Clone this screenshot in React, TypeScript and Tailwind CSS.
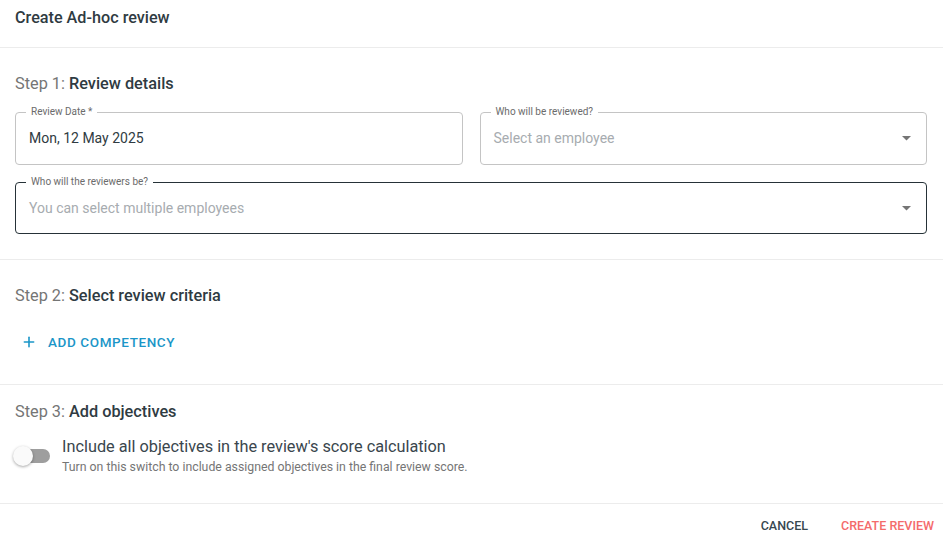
import { Plus } from 'lucide-react'

const font = { fontFamily: 'Roboto, "Liberation Sans", sans-serif' }

function Caret() {
    return (
        <svg width="9" height="5" viewBox="0 0 9 5" className="shrink-0">
            <path d="M0 0 L9 0 L4.5 4.5 Z" fill="#757575" />
        </svg>
    )
}

function OutlinedField({
    label,
    value,
    placeholder,
    select,
    focused,
    height,
}: {
    label: string
    value?: string
    placeholder?: string
    select?: boolean
    focused?: boolean
    height: string
}) {
    return (
        <div
            className={`relative flex items-center rounded-[4px] border pl-[13px] pr-[15px] ${height} ${
                focused ? 'border-[#263238]' : 'border-[#c4c4c4]'
            }`}
        >
            <span className="absolute -top-[7px] left-[10px] bg-white px-[5px] text-[10px] leading-[12px] text-[#6b6b6b]">
                {label}
            </span>
            <span className={`flex-1 text-[14px] ${value ? 'text-[#2f3b42]' : 'text-[#a7acb0]'}`}>
                {value || placeholder}
            </span>
            {select && <Caret />}
        </div>
    )
}

function StepHeading({ step, title }: { step: number; title: string }) {
    return (
        <h2 className="text-[16.3px] leading-[20px] text-[#757575]">
            Step {step}: <span className="font-medium text-[#2f3b42]">{title}</span>
        </h2>
    )
}

export default function App() {
    return (
        <div className="w-[943px] h-[541px] bg-white overflow-hidden" style={font}>
            {/* Header */}
            <div className="h-[48px] border-b border-[#ececec] pl-[15px] pt-[9px]">
                <h1 className="text-[16.2px] leading-[18px] font-medium text-[#2f3b42]">Create Ad-hoc review</h1>
            </div>

            {/* Step 1 */}
            <div className="border-b border-[#ececec] pl-[15px] pr-[16px] pt-[26px] pb-[25px]">
                <StepHeading step={1} title="Review details" />
                <div className="mt-[18px] grid grid-cols-2 gap-[17px]">
                    <OutlinedField label="Review Date *" value="Mon, 12 May 2025" height="h-[53px]" />
                    <OutlinedField
                        label="Who will be reviewed?"
                        placeholder="Select an employee"
                        select
                        height="h-[53px]"
                    />
                </div>
                <div className="mt-[17px]">
                    <OutlinedField
                        label="Who will the reviewers be?"
                        placeholder="You can select multiple employees"
                        select
                        focused
                        height="h-[52px]"
                    />
                </div>
            </div>

            {/* Step 2 */}
            <div className="border-b border-[#ececec] pl-[15px] pt-[26px] pb-[24px]">
                <StepHeading step={2} title="Select review criteria" />
                <button className="mt-[18px] flex h-[36px] items-center gap-[11px] pl-[6px] pr-2 text-[13.5px] font-medium tracking-[0.6px] text-[#1b96c8]">
                    <Plus size={16} strokeWidth={2.4} />
                    ADD COMPETENCY
                </button>
            </div>

            {/* Step 3 */}
            <div className="border-b border-[#ececec] pl-[15px] pt-[17px] pb-[28px]">
                <StepHeading step={3} title="Add objectives" />
                <div className="mt-[15px] flex items-center gap-[12px]">
                    <div className="relative h-[14px] w-[35px] rounded-full bg-[#9e9e9e]">
                        <span className="absolute -left-[2px] -top-[3px] h-[20px] w-[20px] rounded-full bg-[#fafafa] shadow-[0_1px_3px_rgba(0,0,0,0.35)]" />
                    </div>
                    <div>
                        <div className="text-[16.3px] leading-[20px] text-[#3a464d]">
                            Include all objectives in the review's score calculation
                        </div>
                        <div className="mt-[2px] text-[12.3px] leading-[16px] text-[#757575]">
                            Turn on this switch to include assigned objectives in the final review score.
                        </div>
                    </div>
                </div>
            </div>

            {/* Footer */}
            <div className="flex h-[44px] items-center justify-end gap-[33px] pr-[9px]">
                <button className="text-[12.5px] font-medium text-[#37474f]">CANCEL</button>
                <button className="text-[12.5px] font-medium text-[#f46b6b]">CREATE REVIEW</button>
            </div>
        </div>
    )
}
